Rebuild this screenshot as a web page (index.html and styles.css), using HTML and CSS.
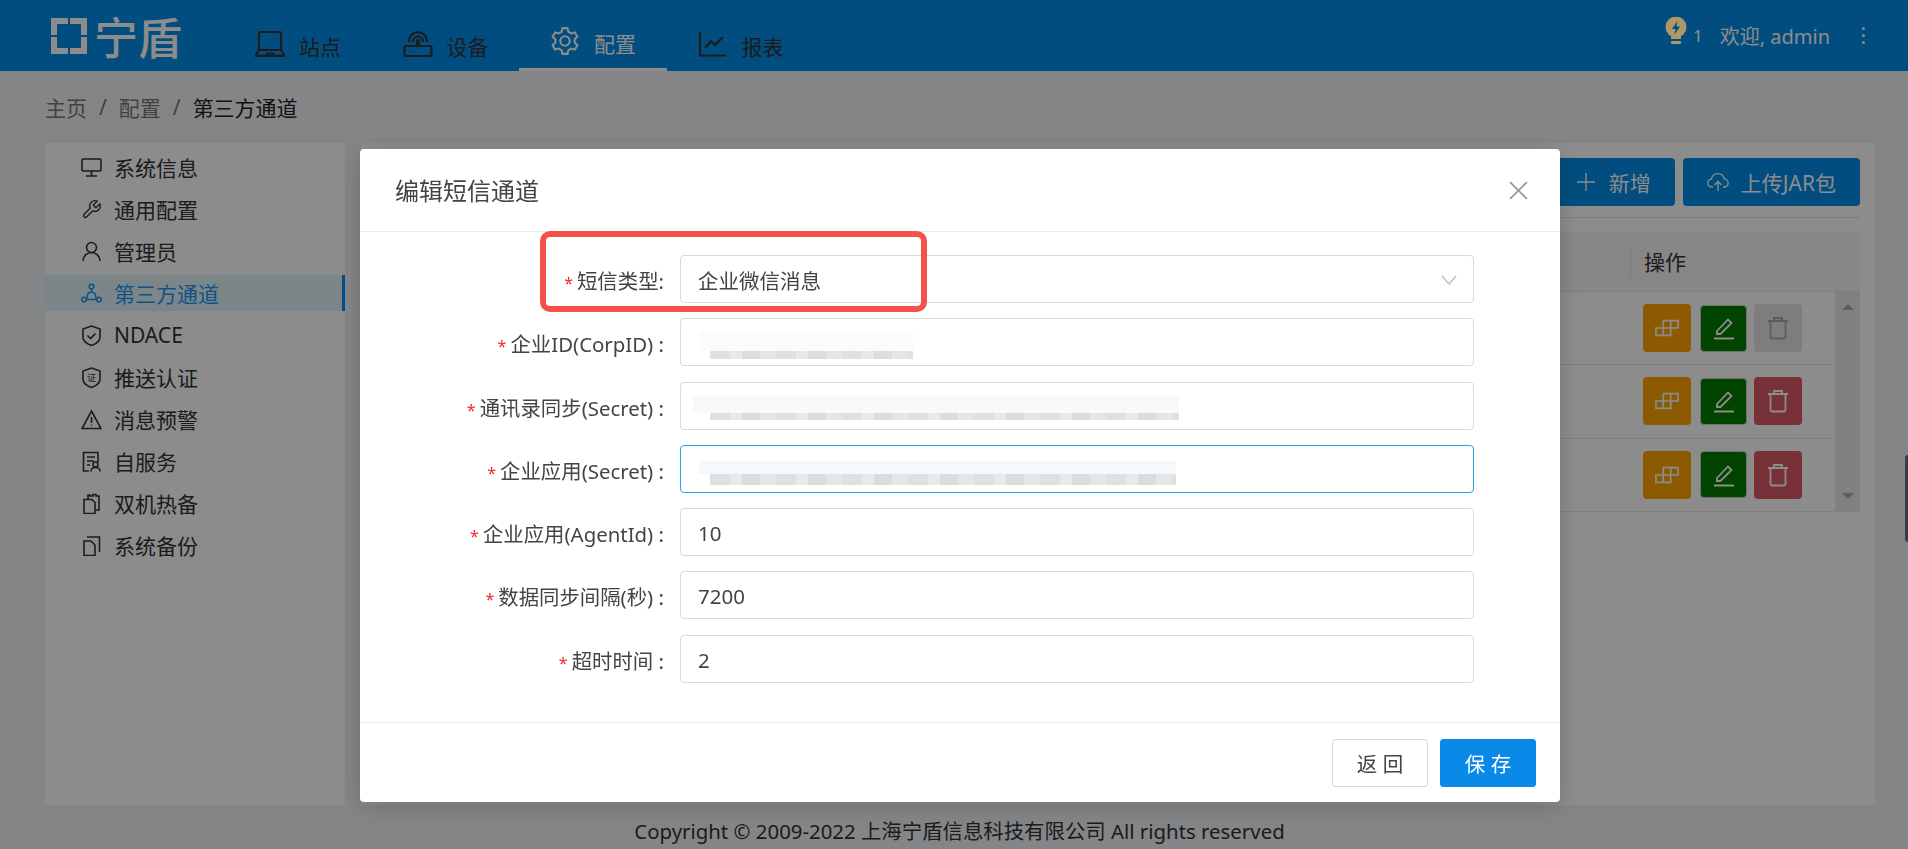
FILE: index.html
```html
<!DOCTYPE html>
<html lang="zh-CN">
<head>
  <meta charset="UTF-8" />
  <title>第三方通道 - 宁盾</title>
  <link rel="stylesheet" href="styles.css">
</head>
<body>

  <svg class="sprite" aria-hidden="true">
    <symbol id="ico-steps" viewBox="0 0 26 18">
      <path d="M9 1h16v8h-8v8H1V9h8zM17 1v8M9 9h8M9 9v8"/>
    </symbol>
    <symbol id="ico-edit" viewBox="0 0 24 24">
      <path d="M5 15 16 3.500l3.500 3.500L8.500 18H5zM2 22.500h20"/>
    </symbol>
    <symbol id="ico-trash" viewBox="0 0 22 24">
      <path d="M1 5h20M7 5V2h8v3M3.500 5v15.500q0 2 2 2h11q2 0 2-2V5"/>
    </symbol>
  </svg>

  <header class="topbar">
    <div class="logo">
      <svg class="logo-mark" viewBox="0 0 36 36">
        <path d="M17 3H3v14M19 3h14v14M17 33H3V19M19 33h14V19"/>
      </svg>
      <span class="logo-text">宁盾</span>
    </div>
    <nav class="nav">
      <a class="nav-item">
        <svg class="nav-icon" viewBox="0 0 30 26"><path d="M4 19V2.500q0-1.500 1.500-1.500h19q1.500 0 1.500 1.500V19M4 19 1 24v.8h28V24l-3-5zM11 25l1-2.500h6l1 2.500"/></svg>
        <span>站点</span>
      </a>
      <a class="nav-item">
        <svg class="nav-icon" viewBox="0 0 30 26"><path d="M6 11C6 5 10 1.200 15 1.200S24 5 24 11M10 11c0-3 2-5.500 5-5.500s5 2.500 5 5.500M14 9.500h2V15h-2zM3 15h24q1.500 0 1.500 1.500v7q0 1.500-1.500 1.500H3q-1.500 0-1.500-1.500v-7Q1.500 15 3 15zM6 20h.6M10 20h.6"/></svg>
        <span>设备</span>
      </a>
      <a class="nav-item active">
        <svg class="nav-icon" viewBox="-1 -1 30 32"><path d="M10.410 5.130 11.330 1.260H16.670L17.590 5.130 20.750 6.960 24.570 5.820 27.240 10.440 24.340 13.180V16.820L27.240 19.560 24.570 24.180 20.750 23.040 17.590 24.870 16.670 28.740H11.330L10.410 24.870 7.250 23.040 3.430 24.180 .76 19.560 3.660 16.820V13.180L.76 10.440 3.430 5.820 7.250 6.960z"/><circle cx="14" cy="15" r="5"/></svg>
        <span>配置</span>
      </a>
      <a class="nav-item">
        <svg class="nav-icon" viewBox="0 0 30 26"><path d="M2 1v23.500h26M7 17l6-7 4 4 8-8"/></svg>
        <span>报表</span>
      </a>
    </nav>
    <div class="user-area">
      <svg class="bulb" viewBox="0 0 22 28">
        <circle class="bulb-fill" cx="11" cy="10" r="10.500"/>
        <rect class="bulb-fill" x="6" y="16" width="10" height="6"/>
        <path class="bulb-flash" d="M12.500 4 7 12h3.500l-1 5.500L15 9.500h-3.500z"/>
        <rect class="bulb-fill" x="6" y="24" width="10" height="3" rx="1"/>
      </svg>
      <span class="bulb-count">1</span>
      <span class="welcome">欢迎, admin</span>
      <span class="more-dots"><i></i><i></i><i></i></span>
    </div>
  </header>

  <div class="crumbs">
    <span>主页</span><span class="sep">/</span><span>配置</span><span class="sep">/</span><span class="current">第三方通道</span>
  </div>

  <div class="layout">
    <aside class="sidebar">
      <a class="side-item">
        <svg viewBox="0 0 21 21"><rect x="1" y="2" width="19" height="12" rx="1"/><path d="M10.500 14v4.500M5 19h11"/></svg>
        <span>系统信息</span>
      </a>
      <a class="side-item">
        <svg viewBox="0 0 24 24"><path d="M14.700 6.300a1 1 0 0 0 0 1.400l1.600 1.600a1 1 0 0 0 1.400 0l3.770-3.770a6 6 0 0 1-7.940 7.940l-6.910 6.910a2.120 2.120 0 0 1-3-3l6.910-6.910a6 6 0 0 1 7.940-7.940l-3.760 3.760z"/></svg>
        <span>通用配置</span>
      </a>
      <a class="side-item">
        <svg viewBox="0 0 21 21"><circle cx="10.500" cy="6.500" r="5"/><path d="M2 20c0-5 4-8.500 8.500-8.500S19 15 19 20"/></svg>
        <span>管理员</span>
      </a>
      <a class="side-item active">
        <svg viewBox="0 0 21 21"><circle cx="10.500" cy="3.500" r="2.300"/><circle cx="3" cy="16.500" r="2.300"/><circle cx="18" cy="16.500" r="2.300"/><path d="M10.500 6v3M10.500 9c-3 0-4.500 3-4.500 6.500M10.500 9c3 0 4.500 3 4.500 6.500M5.500 16.500h10"/></svg>
        <span>第三方通道</span>
      </a>
      <a class="side-item">
        <svg viewBox="0 0 21 21"><path d="M10.500 1 19 4v8c0 4-4 7-8.500 8.500C6 19 2 16 2 12V4zM6.500 10.500l3 3 5-5"/></svg>
        <span>NDACE</span>
      </a>
      <a class="side-item">
        <svg viewBox="0 0 21 21"><path d="M10.500 1 19 4v8c0 4-4 7-8.500 8.500C6 19 2 16 2 12V4z"/><text class="shield-text" x="10.500" y="14">证</text></svg>
        <span>推送认证</span>
      </a>
      <a class="side-item">
        <svg viewBox="0 0 21 21"><path d="M10.500 2 20 19.500H1zM10.500 8v6M10.500 15.800v1"/></svg>
        <span>消息预警</span>
      </a>
      <a class="side-item">
        <svg viewBox="0 0 21 21"><path d="M17 11V1.500H2.500V20H8M6 6h8M6 10h7M6 14h3"/><circle cx="14.500" cy="13.500" r="2.500"/><path d="M10 20.500c0-3 2-4 4.500-4s4.500 1 4.500 4"/></svg>
        <span>自服务</span>
      </a>
      <a class="side-item">
        <svg viewBox="0 0 21 21"><path d="M3 6.500h8l3 3v11H3zM7 6V2h2v1h3V1.500h3V3h3v14h-4"/></svg>
        <span>双机热备</span>
      </a>
      <a class="side-item">
        <svg viewBox="0 0 21 21"><path d="M3 6h7l4 4v10.500H3zM6 2h12.500v15"/></svg>
        <span>系统备份</span>
      </a>
    </aside>

    <main class="panel">
      <div class="toolbar">
        <button class="tool-btn">
          <svg viewBox="0 0 22 22"><path d="M11 2v18M2 11h18"/></svg>
          <span>新增</span>
        </button>
        <button class="tool-btn">
          <svg viewBox="0 0 22 20"><path d="M6 15H5a4 4 0 0 1-.5-8 6.500 6.500 0 0 1 12.800 0A4 4 0 0 1 17 15h-1M11 19v-9M7.500 13 11 9.500l3.500 3.500"/></svg>
          <span>上传JAR包</span>
        </button>
      </div>

      <div class="table">
        <div class="table-head">
          <div class="head-cell">操作</div>
        </div>
        <div class="table-body">
          <div class="rows">
            <div class="row">
              <button class="act orange"><svg><use href="#ico-steps"/></svg></button>
              <button class="act green"><svg><use href="#ico-edit"/></svg></button>
              <button class="act disabled"><svg><use href="#ico-trash"/></svg></button>
            </div>
            <div class="row">
              <button class="act orange"><svg><use href="#ico-steps"/></svg></button>
              <button class="act green"><svg><use href="#ico-edit"/></svg></button>
              <button class="act red"><svg><use href="#ico-trash"/></svg></button>
            </div>
            <div class="row">
              <button class="act orange"><svg><use href="#ico-steps"/></svg></button>
              <button class="act green"><svg><use href="#ico-edit"/></svg></button>
              <button class="act red"><svg><use href="#ico-trash"/></svg></button>
            </div>
          </div>
          <div class="scrollbar">
            <span class="arrow-up"></span>
            <span class="arrow-down"></span>
          </div>
        </div>
      </div>
    </main>
  </div>

  <footer class="copyright">Copyright © 2009-2022 上海宁盾信息科技有限公司 All rights reserved</footer>

  <div class="mask"></div>
  <div class="edge-tab"></div>

  <div class="modal">
    <div class="modal-head">
      <span class="modal-title">编辑短信通道</span>
      <svg class="modal-close" viewBox="0 0 18 18"><path d="M1 1l16 16M17 1 1 17"/></svg>
    </div>

    <form class="modal-body">
      <div class="form-row">
        <label><em>*</em>短信类型:</label>
        <div class="field">
          <span>企业微信消息</span>
          <svg class="chevron" viewBox="0 0 16 10"><path d="M1 1l7 8 7-8"/></svg>
        </div>
      </div>
      <div class="form-row">
        <label><em>*</em>企业ID(CorpID) :</label>
        <div class="field">
          <div class="blur blur-corp"><b></b><i></i></div>
        </div>
      </div>
      <div class="form-row">
        <label><em>*</em>通讯录同步(Secret) :</label>
        <div class="field">
          <div class="blur blur-book"><b></b><i></i></div>
        </div>
      </div>
      <div class="form-row">
        <label><em>*</em>企业应用(Secret) :</label>
        <div class="field focus">
          <div class="blur blur-app"><b></b><i></i></div>
        </div>
      </div>
      <div class="form-row">
        <label><em>*</em>企业应用(AgentId) :</label>
        <div class="field"><span>10</span></div>
      </div>
      <div class="form-row">
        <label><em>*</em>数据同步间隔(秒) :</label>
        <div class="field"><span>7200</span></div>
      </div>
      <div class="form-row">
        <label><em>*</em>超时时间 :</label>
        <div class="field"><span>2</span></div>
      </div>
    </form>

    <div class="modal-foot">
      <button class="btn">返 回</button>
      <button class="btn primary">保 存</button>
    </div>

    <div class="red-box"></div>
  </div>

</body>
</html>
```

FILE: styles.css
```css
* { box-sizing: border-box; }

html, body {
  height: 849px;
  overflow: hidden;
}

body {
  margin: 0;
  background: #f0f2f5;
  color: #333;
  font-family: "Noto Sans", "Noto Sans CJK SC", sans-serif;
  font-size: 21px;
}

.sprite { display: none; }

button {
  font: inherit;
  border: none;
  cursor: pointer;
}

svg {
  fill: none;
  stroke: currentColor;
}

/* top bar */
.topbar {
  display: flex;
  align-items: center;
  height: 71px;
  background: #038ce8;
}

.logo {
  display: flex;
  align-items: center;
  gap: 7px;
  width: 224px;
  padding-left: 51px;
  color: #fff;
}

.logo-mark {
  width: 36px;
  height: 36px;
  stroke-width: 6;
}

.logo-text {
  font-family: "Noto Sans CJK SC", sans-serif;
  font-size: 44px;
  line-height: 36px;
  font-weight: 500;
}

.nav {
  display: flex;
  height: 71px;
}

.nav-item {
  display: flex;
  align-items: center;
  gap: 14px;
  width: 147.500px;
  height: 71px;
  padding: 16px 0 0 31px;
  color: #333;
}

.nav-item span { margin-top: 5px; }

.nav-icon {
  width: 30px;
  height: 30px;
  stroke-width: 2.200;
}

.nav-item.active {
  color: #fff;
  border-bottom: 3px solid #fff;
  padding-top: 13px;
}

.user-area {
  display: flex;
  align-items: center;
  margin-left: auto;
  padding-right: 43px;
  color: #fff;
}

/* the bulb keeps its own colour over the dimmed page */
.bulb {
  position: relative;
  z-index: 20;
  width: 22px;
  height: 28px;
  margin-top: -10px;
  stroke: none;
}

.bulb-fill { fill: #ae9869; }
.bulb-flash { fill: #024d80; }

.bulb-count {
  margin-left: 6px;
  font-size: 17px;
}

.welcome { margin-left: 17px; font-size: 20px; }

.more-dots {
  display: flex;
  flex-direction: column;
  gap: 4px;
  margin-left: 32px;
}

.more-dots i {
  width: 3px;
  height: 3px;
  border-radius: 50%;
  background: #fff;
}

/* breadcrumb */
.crumbs {
  display: flex;
  align-items: center;
  height: 72px;
  padding-left: 45px;
  color: #777;
}

.crumbs .sep { margin: 0 12px; }
.crumbs .current { color: #222; }

/* page */
.layout {
  display: flex;
  gap: 16px;
  height: 662px;
  padding: 0 33px 0 45px;
}

.sidebar {
  display: flex;
  flex-direction: column;
  gap: 6px;
  width: 300px;
  padding-top: 6px;
  background: #fff;
}

.side-item {
  display: flex;
  align-items: center;
  gap: 12px;
  height: 36px;
  padding-left: 36px;
  color: #333;
}

.side-item svg {
  width: 21px;
  height: 21px;
  stroke-width: 1.600;
}

.side-item.active {
  background: #e2f4f9;
  color: #1c96f5;
  border-right: 3px solid #0090ff;
}

.shield-text {
  fill: currentColor;
  stroke: none;
  font-size: 9px;
  text-anchor: middle;
}

.panel {
  flex: 1;
  padding: 15px 15px 0;
  background: #fff;
}

.toolbar {
  display: flex;
  justify-content: flex-end;
  gap: 8px;
  padding-bottom: 11px;
  border-bottom: 1px solid #e4e4e4;
}

.tool-btn {
  display: flex;
  align-items: center;
  gap: 12px;
  height: 48px;
  padding: 0 24px;
  border-radius: 4px;
  background: #038ce8;
  color: #fff;
}

.tool-btn svg {
  width: 22px;
  height: 22px;
  stroke-width: 1.400;
}

.table { margin-top: 15px; }

.table-head {
  display: flex;
  justify-content: flex-end;
  align-items: center;
  height: 59px;
  background: #f6f6f6;
  border-bottom: 1px solid #e8e8e8;
}

.head-cell {
  width: 230px;
  padding-left: 13px;
  line-height: 33px;
  border-left: 1px solid #e0e0e0;
}

.table-body { display: flex; }

.rows { flex: 1; }

.row {
  display: flex;
  justify-content: flex-end;
  align-items: center;
  gap: 7px;
  height: 73.330px;
  padding-right: 33px;
  border-bottom: 1px solid #e8e8e8;
}

.act {
  display: flex;
  align-items: center;
  justify-content: center;
  width: 48px;
  height: 48px;
  padding: 0;
  border-radius: 4px;
  color: #fff;
}

.act svg {
  width: 24px;
  height: 24px;
  stroke-width: 1.800;
}

.act.orange { background: #ffa400; margin-right: 2px; }
.act.green { width: 47px; height: 47px; background: #007c00; border: 1px solid #ccc; }
.act.red { background: #da5b64; }
.act.disabled { background: #e3e3e3; color: #aaa; }

.scrollbar {
  display: flex;
  flex-direction: column;
  justify-content: space-between;
  align-items: center;
  width: 25px;
  padding: 12px 0;
  background: #e9e9e9;
  border-bottom: 1px solid #e8e8e8;
}

.arrow-up, .arrow-down {
  width: 0;
  height: 0;
  border-left: 6px solid transparent;
  border-right: 6px solid transparent;
}

.arrow-up { border-bottom: 6px solid #aaa; }
.arrow-down { border-top: 6px solid #aaa; }

.copyright {
  padding: 4px 0 0 11px;
  line-height: 44px;
  text-align: center;
  font-size: 20.400px;
  color: #333;
}

/* dimmed page + dialog */
.mask {
  position: fixed;
  inset: 0;
  z-index: 10;
  background: rgba(0, 0, 0, 0.45);
}

.edge-tab {
  position: fixed;
  top: 455px;
  right: 0;
  z-index: 11;
  width: 3px;
  height: 87px;
  border-radius: 3px 0 0 3px;
  background: #3b3b4b;
}

.modal {
  position: fixed;
  top: 149px;
  left: 360px;
  z-index: 12;
  display: flex;
  flex-direction: column;
  width: 1200px;
  height: 653px;
  border-radius: 4px;
  background: #fff;
  box-shadow: 0 4px 24px rgba(0, 0, 0, 0.18);
}

.modal-head {
  display: flex;
  align-items: center;
  justify-content: space-between;
  height: 83px;
  padding: 0 32px 2px 35px;
  border-bottom: 1px solid #ececec;
}

.modal-title {
  font-size: 24px;
  color: #444;
}

.modal-close {
  width: 19px;
  height: 19px;
  margin-top: 2px;
  color: #999;
  stroke-width: 1.600;
}

.modal-body {
  flex: 1;
  display: flex;
  flex-direction: column;
  gap: 15.300px;
  padding-top: 23px;
  margin: 0;
}

.form-row {
  display: flex;
  align-items: center;
  gap: 16px;
}

.form-row label {
  width: 304px;
  padding-top: 2px;
  text-align: right;
  font-size: 20.400px;
  color: #444;
}

.form-row em {
  margin-right: 4px;
  font-style: normal;
  font-size: 16px;
  color: #f5222d;
}

.field {
  display: flex;
  align-items: center;
  justify-content: space-between;
  width: 794px;
  height: 48px;
  padding: 2px 17px 0;
  border: 1.500px solid #d9d9d9;
  border-radius: 4px;
  color: #444;
  font-size: 20.500px;
}

.field.focus { border-color: #27a3ef; }

.chevron {
  width: 16px;
  height: 10px;
  margin-right: -1px;
  color: #bbb;
  stroke-width: 1.200;
}

/* blurred secrets */
.blur {
  display: flex;
  flex-direction: column;
  align-self: flex-start;
  margin-top: 11px;
}

.blur b { display: block; background: #f8f8f8; }

.blur i {
  display: block;
  margin-left: 11px;
  background: repeating-linear-gradient(90deg, #e0e0e0 0 20px, #e9e9e9 20px 32px, #dcdcdc 32px 50px, #e6e6e6 50px 66px);
}

.blur-corp { width: 214px; margin-left: 1px; }
.blur-corp b { height: 19px; background: #fbfbfb; }
.blur-corp i { height: 8px; }

.blur-book { width: 486px; margin-left: -5px; }
.blur-book b { height: 17px; background: #f9f9f9; }
.blur-book i { height: 7px; margin-left: 17px; }

.blur-app { width: 477px; margin-left: 1px; margin-top: 13px; }
.blur-app b { height: 13px; background: #f5f9fd; }
.blur-app i { height: 11px; }

.modal-foot {
  display: flex;
  justify-content: flex-end;
  gap: 12px;
  height: 80px;
  padding: 16px 24px 0 0;
  border-top: 1px solid #ececec;
}

.btn {
  width: 96px;
  height: 48px;
  border: 1px solid #d9d9d9;
  border-radius: 3px;
  background: #fff;
  color: #444;
  font-size: 20.500px;
}

.btn.primary {
  border-color: #0a8ae8;
  background: #0a8ae8;
  color: #fff;
}

.red-box {
  position: absolute;
  top: 82px;
  left: 180px;
  width: 387px;
  height: 81px;
  border: 6px solid #f4504c;
  border-radius: 10px;
}
```
